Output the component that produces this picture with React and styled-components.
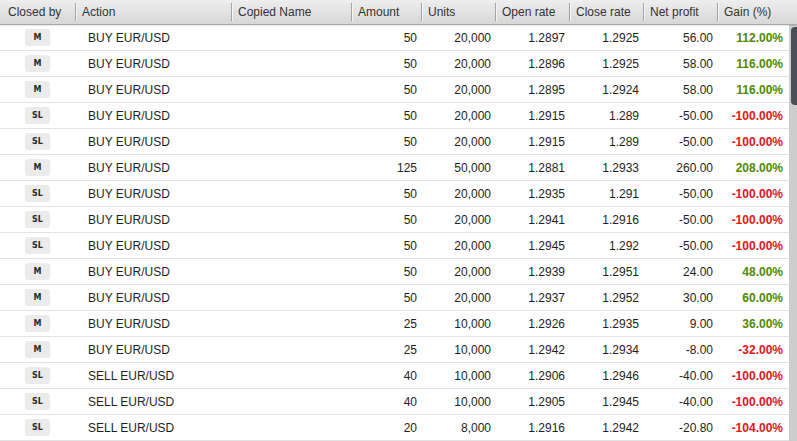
import React from 'react';
import styled, { createGlobalStyle } from 'styled-components';

const GlobalStyle = createGlobalStyle`
    html, body {
        margin: 0;
        padding: 0;
        background: #ffffff;
        overflow: hidden;
    }
    * {
        box-sizing: border-box;
    }
`;

const COLUMNS = '75px 156px 120px 70px 74px 74px 74px 74px 1fr';

const rows = [
    ['M', 'BUY EUR/USD', 50, '20,000', '1.2897', '1.2925', '56.00', '112.00%'],
    ['M', 'BUY EUR/USD', 50, '20,000', '1.2896', '1.2925', '58.00', '116.00%'],
    ['M', 'BUY EUR/USD', 50, '20,000', '1.2895', '1.2924', '58.00', '116.00%'],
    ['SL', 'BUY EUR/USD', 50, '20,000', '1.2915', '1.289', '-50.00', '-100.00%'],
    ['SL', 'BUY EUR/USD', 50, '20,000', '1.2915', '1.289', '-50.00', '-100.00%'],
    ['M', 'BUY EUR/USD', 125, '50,000', '1.2881', '1.2933', '260.00', '208.00%'],
    ['SL', 'BUY EUR/USD', 50, '20,000', '1.2935', '1.291', '-50.00', '-100.00%'],
    ['SL', 'BUY EUR/USD', 50, '20,000', '1.2941', '1.2916', '-50.00', '-100.00%'],
    ['SL', 'BUY EUR/USD', 50, '20,000', '1.2945', '1.292', '-50.00', '-100.00%'],
    ['M', 'BUY EUR/USD', 50, '20,000', '1.2939', '1.2951', '24.00', '48.00%'],
    ['M', 'BUY EUR/USD', 50, '20,000', '1.2937', '1.2952', '30.00', '60.00%'],
    ['M', 'BUY EUR/USD', 25, '10,000', '1.2926', '1.2935', '9.00', '36.00%'],
    ['M', 'BUY EUR/USD', 25, '10,000', '1.2942', '1.2934', '-8.00', '-32.00%'],
    ['SL', 'SELL EUR/USD', 40, '10,000', '1.2906', '1.2946', '-40.00', '-100.00%'],
    ['SL', 'SELL EUR/USD', 40, '10,000', '1.2905', '1.2945', '-40.00', '-100.00%'],
    ['SL', 'SELL EUR/USD', 20, '8,000', '1.2916', '1.2942', '-20.80', '-104.00%'],
];

const headers = ['Closed by', 'Action', 'Copied Name', 'Amount', 'Units', 'Open rate', 'Close rate', 'Net profit', 'Gain (%)'];

const Table = styled.div`
    width: 100vw;
    height: 100vh;
    display: flex;
    flex-direction: column;
    font-family: "Liberation Sans", Arial, sans-serif;
    font-size: 12px;
    color: #1e1e1e;
`;

const HeaderRow = styled.div`
    flex: none;
    height: 25px;
    display: grid;
    grid-template-columns: ${COLUMNS};
    background: linear-gradient(#eeeeee, #d7d7d7);
    border-bottom: 1px solid #a9a9a9;
    box-shadow: 0 1px 1px rgba(0, 0, 0, 0.08);
    position: relative;
    z-index: 1;
`;

const HeaderCell = styled.div`
    display: flex;
    align-items: center;
    padding-left: ${p => (p.$first ? 8 : 7)}px;
    color: #333333;
    white-space: nowrap;
    position: relative;

    &::before {
        content: ${p => (p.$first ? 'none' : "''")};
        position: absolute;
        left: 0;
        top: 3px;
        bottom: 3px;
        width: 1px;
        background: #a3a3a3;
        box-shadow: 1px 0 0 #f6f6f6;
    }
`;

const BodyArea = styled.div`
    flex: 1;
    min-height: 0;
    display: flex;
`;

const Rows = styled.div`
    flex: 1;
    min-width: 0;
    overflow: hidden;
`;

const ScrollTrack = styled.div`
    flex: none;
    width: 8px;
    background: #cdcdcd;
    padding: 2px 0 0 2px;
`;

const ScrollThumb = styled.div`
    height: 78px;
    background: #4a4e57;
    border-radius: 4px 0 0 4px;
`;

const Row = styled.div`
    height: 26px;
    display: grid;
    grid-template-columns: ${COLUMNS};
    border-bottom: 1px solid #e2e2e2;
    background: #ffffff;
`;

const Cell = styled.div`
    display: flex;
    align-items: center;
    justify-content: ${p => (p.$align === 'right' ? 'flex-end' : p.$align === 'center' ? 'center' : 'flex-start')};
    padding: ${p => (p.$align === 'right' ? `0 ${p.$pad || 4}px 0 0` : p.$align === 'center' ? '0' : '0 0 0 13px')};
    white-space: nowrap;
`;

const Badge = styled.span`
    width: 25px;
    height: 17px;
    border-radius: 3px;
    background: #ebebeb;
    color: #2a2a2a;
    font-family: "DejaVu Sans", sans-serif;
    font-size: 8px;
    font-weight: 700;
    display: flex;
    align-items: center;
    justify-content: center;
    margin-top: -1px;
`;

const Gain = styled.span`
    font-weight: 700;
    color: ${p => (p.$negative ? '#e0141c' : '#4f8a00')};
`;

const App = () => {
    return (
        <Table>
            <GlobalStyle />
            <HeaderRow>
                {headers.map((h, i) => (
                    <HeaderCell key={h} $first={i === 0}>{h}</HeaderCell>
                ))}
            </HeaderRow>
            <BodyArea>
                <Rows>
                    {rows.map((r, i) => (
                        <Row key={i}>
                            <Cell $align="center"><Badge>{r[0]}</Badge></Cell>
                            <Cell>{r[1]}</Cell>
                            <Cell />
                            <Cell $align="right">{r[2]}</Cell>
                            <Cell $align="right">{r[3]}</Cell>
                            <Cell $align="right">{r[4]}</Cell>
                            <Cell $align="right">{r[5]}</Cell>
                            <Cell $align="right">{r[6]}</Cell>
                            <Cell $align="right" $pad={6}>
                                <Gain $negative={r[7].startsWith('-')}>{r[7]}</Gain>
                            </Cell>
                        </Row>
                    ))}
                </Rows>
                <ScrollTrack>
                    <ScrollThumb />
                </ScrollTrack>
            </BodyArea>
        </Table>
    );
};

export default App;
